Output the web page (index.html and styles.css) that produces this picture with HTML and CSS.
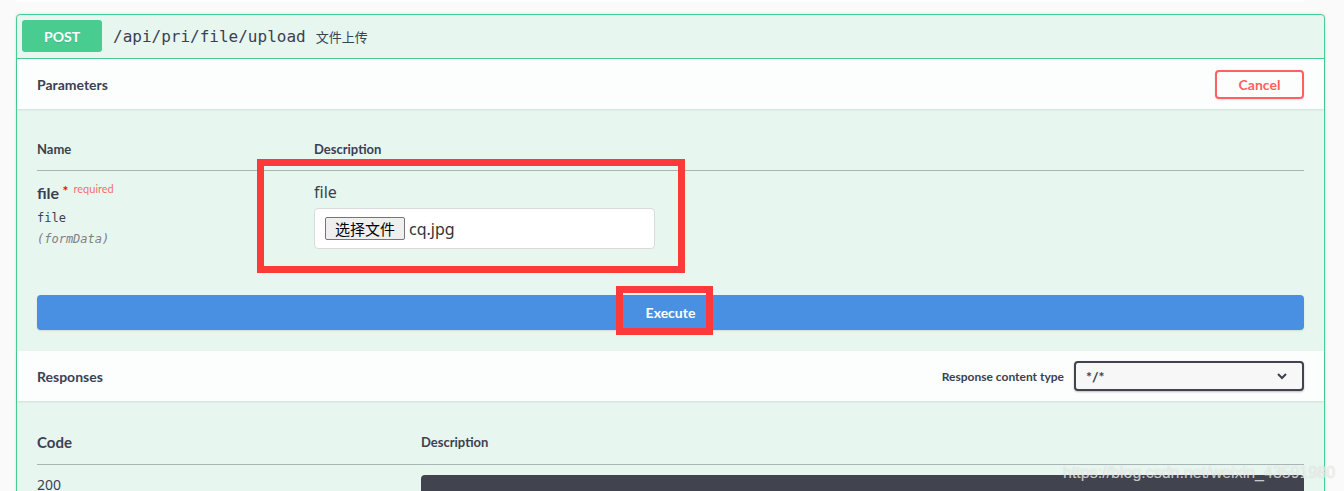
FILE: index.html
```html
<!DOCTYPE html>
<html>
<head>
<meta charset="utf-8">
<link rel="stylesheet" href="styles.css">
</head>
<body>
<div class="prev-edge"></div>
<div class="opblock">
  <div class="summary">
    <span class="method">POST</span>
    <span class="path">/api/pri/file/upload</span>
    <span class="summary-desc">文件上传</span>
  </div>

  <div class="section-header">
    <h4 class="section-title">Parameters</h4>
    <button class="btn-cancel">Cancel</button>
  </div>

  <div class="section-body params-body">
    <table class="params">
      <thead>
        <tr><th class="col-name">Name</th><th>Description</th></tr>
      </thead>
      <tbody>
        <tr>
          <td class="col-name">
            <div class="param-name">file<span class="star">&nbsp;*</span><span class="req">required</span></div>
            <div class="param-type">file</div>
            <div class="param-in">(formData)</div>
          </td>
          <td>
            <div class="param-desc">file</div>
            <div class="file-box">
              <span class="file-btn">选择文件</span><span class="file-name">cq.jpg</span>
            </div>
          </td>
        </tr>
      </tbody>
    </table>
    <div class="execute-wrap">
      <button class="btn-execute">Execute</button>
    </div>
  </div>

  <div class="section-header">
    <h4 class="section-title">Responses</h4>
    <div class="content-type">
      <span class="ct-label">Response content type</span>
      <div class="select">
        <span>*/*</span>
        <svg width="12" height="8" viewBox="0 0 12 8"><path d="M2 2l4 4 4-4" fill="none" stroke="#3b4151" stroke-width="2"/></svg>
      </div>
    </div>
  </div>

  <div class="section-body responses-body">
    <table class="responses">
      <thead>
        <tr><th class="col-code">Code</th><th class="col-rdesc">Description</th></tr>
      </thead>
      <tbody>
        <tr>
          <td class="col-code code-val">200</td>
          <td><div class="dark-box"></div></td>
        </tr>
      </tbody>
    </table>
  </div>
</div>

<div class="mark mark-params"></div>
<div class="mark mark-exec"></div>
<div class="watermark">https://blog.csdn.net/weixin_43591980</div>
</body>
</html>
```
FILE: styles.css
```css
html, body {
  margin: 0;
  padding: 0;
  background: #fafafa;
  overflow: hidden;
  height: 491px;
}
body {
  font-family: Lato, "Noto Sans", "Noto Sans CJK SC", sans-serif;
  color: #3b4151;
  position: relative;
}
.prev-edge {
  height: 2px;
  margin: 0 40px 0 16px;
  background: #ffffff;
}
.opblock {
  margin: 12px 19px 0 16px;
  border: 1px solid #49cc90;
  border-radius: 4px;
  background: #e8f6f0;
  box-shadow: 0 0 3px rgba(0,0,0,.12);
}
.summary {
  display: flex;
  align-items: center;
  padding: 5px 5px 6px;
  height: 32px;
  border-bottom: 1px solid #49cc90;
}
.method {
  width: 80px;
  height: 32px;
  border-radius: 3px;
  background: #49cc90;
  color: #fff;
  font-weight: 700;
  font-size: 14px;
  display: flex;
  align-items: center;
  justify-content: center;
  text-shadow: 0 1px 0 rgba(0,0,0,.1);
}
.path {
  font-family: "DejaVu Sans Mono", "Liberation Mono", monospace;
  font-size: 16px;
  margin-left: 11px;
  color: #3b4151;
}
.summary-desc {
  font-family: "Noto Sans CJK SC", sans-serif;
  font-size: 13px;
  margin-left: 10px;
  color: #3b4151;
}
.section-header {
  display: flex;
  align-items: center;
  justify-content: space-between;
  height: 50px;
  padding: 0 20px;
  background: rgba(255,255,255,.85);
  box-shadow: 0 1px 2px rgba(0,0,0,.1);
}
.section-title {
  margin: 0;
  font-size: 14px;
  font-weight: 700;
}
.btn-cancel {
  width: 89px;
  height: 29px;
  border: 2px solid #ff6060;
  border-radius: 4px;
  background: transparent;
  color: #ff6060;
  font-family: Lato, sans-serif;
  font-weight: 700;
  font-size: 14px;
  box-shadow: 0 1px 2px rgba(0,0,0,.1);
  padding: 0;
}
.section-body {
  padding: 20px;
}
table {
  width: 100%;
  border-collapse: collapse;
}
th {
  text-align: left;
  font-size: 13px;
  font-weight: 700;
  padding: 12px 0;
  line-height: 17px;
  border-bottom: 1px solid rgba(59,65,81,.2);
}
td {
  vertical-align: top;
  padding: 0;
}
.params .col-name { width: 277px; }
.params td { padding-top: 10px; padding-bottom: 45px; }
.params td + td { padding-top: 11px; }
.param-name {
  font-size: 16px;
  font-weight: 700;
  line-height: 24px;
}
.star {
  color: red;
  font-size: 14px;
  vertical-align: top;
  position: relative;
  top: -2px;
}
.req {
  color: rgba(255,0,0,.6);
  font-size: 11px;
  font-weight: 400;
  vertical-align: top;
  margin-left: 5px;
  position: relative;
  top: -4px;
}
.param-type {
  font-family: "DejaVu Sans Mono", monospace;
  font-size: 12px;
  margin-top: 3px;
  line-height: 20px;
}
.param-in {
  font-family: "DejaVu Sans Mono", monospace;
  font-size: 12px;
  font-style: italic;
  color: gray;
  line-height: 22px;
}
.param-desc {
  font-family: "Noto Sans", sans-serif;
  font-size: 16px;
  line-height: 20px;
  color: #3b4151;
}
.file-box {
  margin-top: 6px;
  width: 319px;
  height: 23px;
  padding: 8px 10px;
  border: 1px solid #d9d9d9;
  border-radius: 4px;
  background: #fff;
  display: flex;
  align-items: center;
}
.file-btn {
  box-sizing: border-box;
  height: 23px;
  width: 80px;
  border: 1px solid #767676;
  border-radius: 2px;
  background: #efefef;
  color: #000;
  font-family: "Noto Sans CJK SC", sans-serif;
  font-size: 15px;
  display: flex;
  align-items: center;
  justify-content: center;
}
.file-name {
  font-family: "Noto Sans", sans-serif;
  font-size: 16px;
  margin-left: 4px;
  color: #333;
}
.btn-execute {
  display: block;
  width: 100%;
  height: 35px;
  border: none;
  border-radius: 4px;
  background: #4990e2;
  color: #fff;
  font-family: Lato, sans-serif;
  font-size: 14px;
  font-weight: 700;
  box-shadow: 0 1px 2px rgba(0,0,0,.1);
}
.params-body {
  padding-bottom: 21px;
}
.content-type {
  display: flex;
  align-items: center;
}
.ct-label {
  font-size: 12px;
  font-weight: 700;
  margin-right: 10px;
}
.select {
  box-sizing: border-box;
  width: 230px;
  height: 30px;
  border: 2px solid #41444e;
  border-radius: 4px;
  background: #f7f7f7;
  box-shadow: 0 1px 2px rgba(0,0,0,.25);
  display: flex;
  align-items: center;
  justify-content: space-between;
  padding: 0 14px 0 10px;
  font-size: 14px;
  font-weight: 700;
}
.responses .col-code { width: 384px; }
.responses th.col-code {
  font-size: 15px;
  line-height: 20px;
  padding: 11px 0 12px;
}
.responses th.col-rdesc {
  vertical-align: middle;
}
.code-val {
  font-family: "Noto Sans", sans-serif;
  font-size: 14px;
  padding-top: 10px;
  line-height: 20px;
}
.dark-box {
  margin-top: 10px;
  height: 60px;
  border-radius: 4px;
  background: #41444e;
}
.mark {
  position: absolute;
  border: 7px solid #fc3a3a;
  box-sizing: border-box;
}
.mark-params {
  left: 257px;
  top: 159px;
  width: 428px;
  height: 114px;
}
.mark-exec {
  left: 616px;
  top: 286px;
  width: 97px;
  height: 49px;
}
.watermark {
  position: absolute;
  left: 1063px;
  top: 464px;
  font-family: "Liberation Sans", Arial, sans-serif;
  font-size: 16px;
  color: rgba(255,255,255,.7);
  text-shadow: 0 0 1px rgba(120,120,120,.4);
  white-space: nowrap;
}
```
